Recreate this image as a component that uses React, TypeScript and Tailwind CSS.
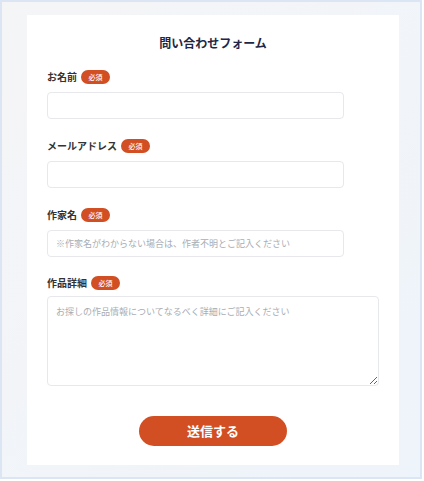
const font = { fontFamily: '"Noto Sans CJK JP", "Noto Sans", sans-serif' }

function Badge() {
  return (
    <span className="inline-flex h-[14px] w-[29px] items-center justify-center rounded-full bg-[#d14f22] text-[7px] font-medium leading-none text-white">
      必須
    </span>
  )
}

function Label({ text }: { text: string }) {
  return (
    <div className="flex h-[14px] items-center gap-[4px]">
      <span className="text-[10px] font-bold leading-none text-[#333333]">{text}</span>
      <Badge />
    </div>
  )
}

export default function App() {
  return (
    <div style={font} className="h-[481px] w-[424px] bg-white">
      <div className="h-[479px] w-[422px] border-2 border-[#dbe5f3] bg-gradient-to-br from-[#f5f5f6] to-[#eef4fb] pl-[25px] pt-[13px]">
        <div className="flex h-[450px] w-[372px] flex-col bg-white px-[20px] pt-[19px]">
          <h1 className="text-center text-[12px] font-bold leading-[18px] text-[#1f2747]">問い合わせフォーム</h1>

          <div className="mt-[18px]">
            <Label text="お名前" />
          </div>
          <input className="mt-[8px] h-[27px] w-[297px] rounded-[4px] border border-[#e6e8eb] px-[8px] text-[9px] outline-none" />

          <div className="mt-[20px]">
            <Label text="メールアドレス" />
          </div>
          <input className="mt-[8px] h-[27px] w-[297px] rounded-[4px] border border-[#e6e8eb] px-[8px] text-[9px] outline-none" />

          <div className="mt-[20px]">
            <Label text="作家名" />
          </div>
          <input
            placeholder="※作家名がわからない場合は、作者不明とご記入ください"
            className="mt-[8px] h-[27px] w-[297px] rounded-[4px] border border-[#e6e8eb] px-[8px] text-[9px] outline-none placeholder:text-[#a9adb3]"
          />

          <div className="mt-[19px]">
            <Label text="作品詳細" />
          </div>
          <textarea
            placeholder="お探しの作品情報についてなるべく詳細にご記入ください"
            className="mt-[6px] block h-[90px] w-[332px] rounded-[4px] border border-[#e6e8eb] px-[8px] pt-[9px] text-[9px] leading-[12px] outline-none placeholder:text-[#a9adb3]"
          />

          <div className="mt-[30px] flex justify-center">
            <button className="h-[30px] w-[148px] rounded-full bg-[#d14f22] text-[13px] font-bold text-white">
              送信する
            </button>
          </div>
        </div>
      </div>
    </div>
  )
}
